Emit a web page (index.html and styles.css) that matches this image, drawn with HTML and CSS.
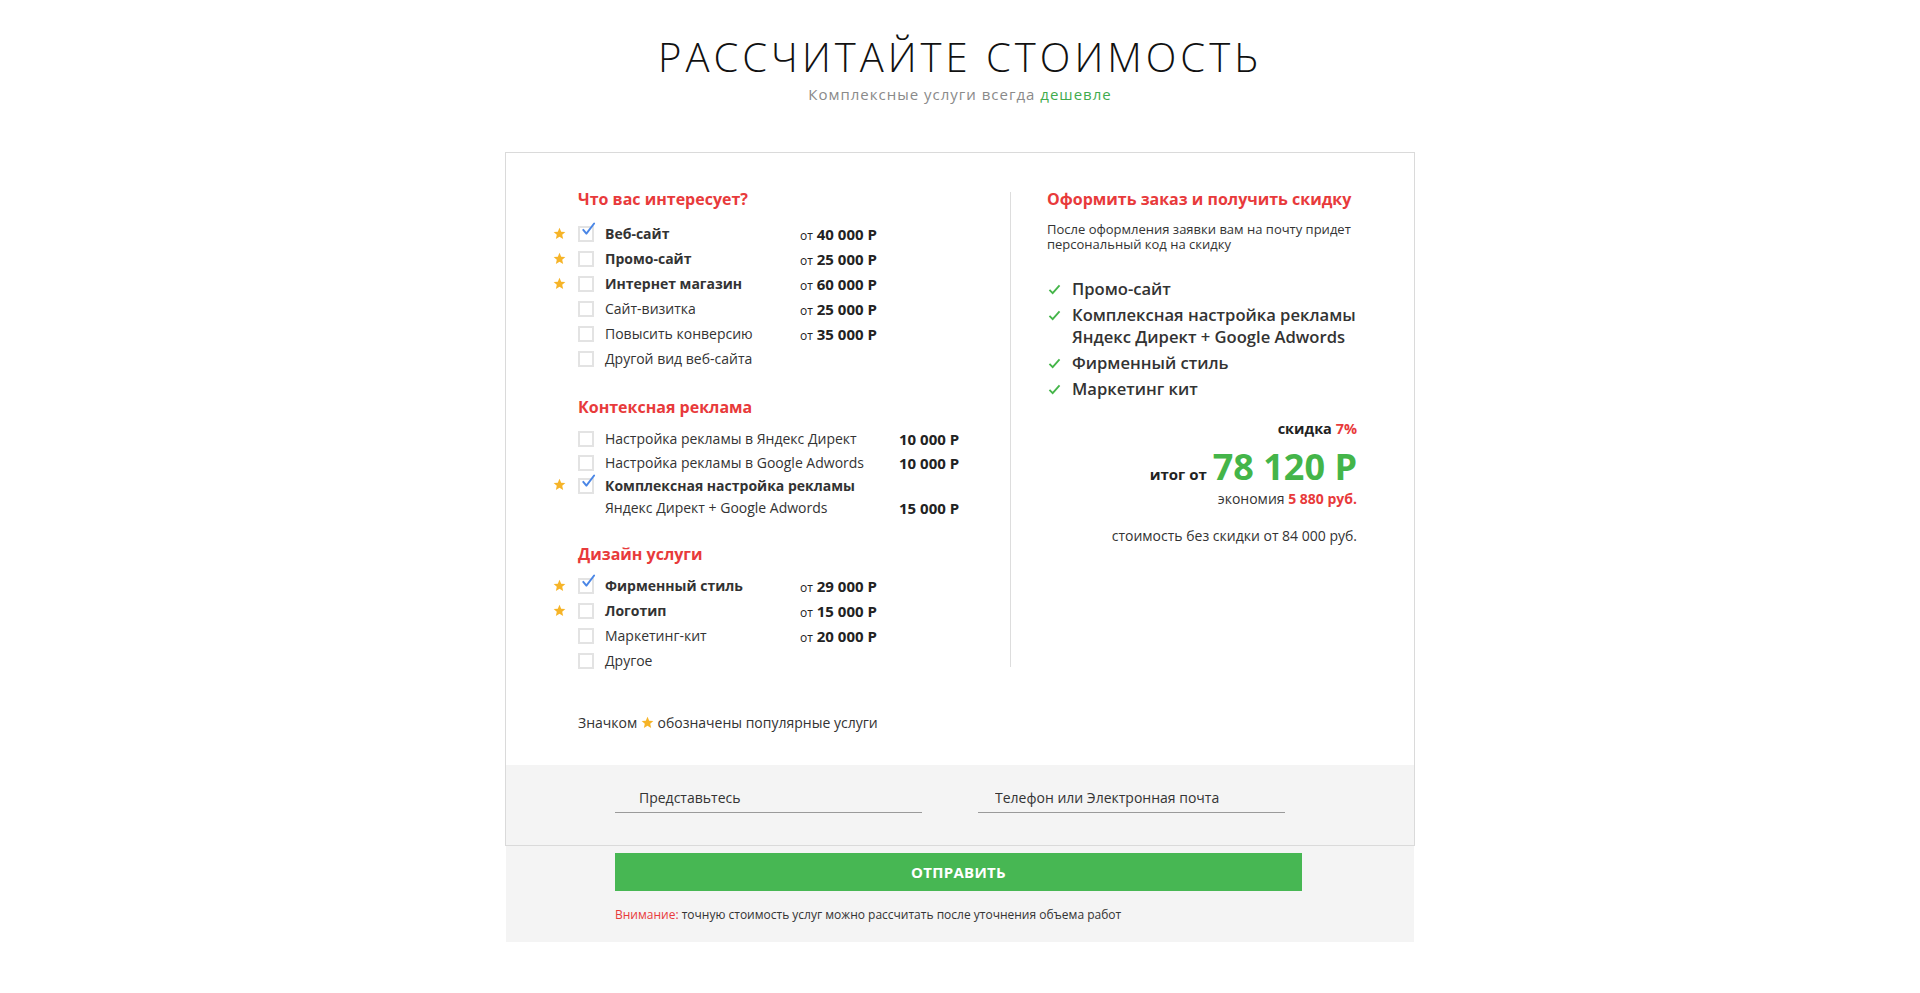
FILE: index.html
```html
<!DOCTYPE html>
<html lang="ru">
<head>
<meta charset="utf-8">
<title>Рассчитайте стоимость</title>
<link rel="stylesheet" href="styles.css">
</head>
<body>
<section class="calc">
  <header class="calc-head">
    <h1 class="calc-title">РАССЧИТАЙТЕ СТОИМОСТЬ</h1>
    <p class="calc-sub">Комплексные услуги всегда <span class="green">дешевле</span></p>
  </header>

  <div class="card">
    <div class="card-body">
      <div class="calc-top">
        <div class="col-left">
          <h3 class="sec-title">Что вас интересует?</h3>
          <ul class="opts opts-1">
            <li class="opt"><span class="star-cell"><svg class="star" viewBox="0 0 24 24"><path d="M12 1.5l3.1 7.1 7.7.7-5.8 5.1 1.7 7.6L12 18l-6.7 4 1.7-7.6-5.8-5.1 7.7-.7z"/></svg></span><span class="cb checked"><svg class="tick" viewBox="0 0 20 20"><path d="M3 10.5l4.2 5L17.5 2"/></svg></span><span class="lbl b">Веб-сайт</span><span class="price"><small>от</small> 40 000 Р</span></li>
            <li class="opt"><span class="star-cell"><svg class="star" viewBox="0 0 24 24"><path d="M12 1.5l3.1 7.1 7.7.7-5.8 5.1 1.7 7.6L12 18l-6.7 4 1.7-7.6-5.8-5.1 7.7-.7z"/></svg></span><span class="cb"></span><span class="lbl b">Промо-сайт</span><span class="price"><small>от</small> 25 000 Р</span></li>
            <li class="opt"><span class="star-cell"><svg class="star" viewBox="0 0 24 24"><path d="M12 1.5l3.1 7.1 7.7.7-5.8 5.1 1.7 7.6L12 18l-6.7 4 1.7-7.6-5.8-5.1 7.7-.7z"/></svg></span><span class="cb"></span><span class="lbl b">Интернет магазин</span><span class="price"><small>от</small> 60 000 Р</span></li>
            <li class="opt"><span class="star-cell"></span><span class="cb"></span><span class="lbl">Сайт-визитка</span><span class="price"><small>от</small> 25 000 Р</span></li>
            <li class="opt"><span class="star-cell"></span><span class="cb"></span><span class="lbl">Повысить конверсию</span><span class="price"><small>от</small> 35 000 Р</span></li>
            <li class="opt"><span class="star-cell"></span><span class="cb"></span><span class="lbl">Другой вид веб-сайта</span><span class="price"></span></li>
          </ul>

          <h3 class="sec-title sec-2">Контексная реклама</h3>
          <ul class="opts opts-2">
            <li class="opt"><span class="star-cell"></span><span class="cb"></span><span class="lbl">Настройка рекламы в Яндекс Директ</span><span class="price">10 000 Р</span></li>
            <li class="opt"><span class="star-cell"></span><span class="cb"></span><span class="lbl">Настройка рекламы в Google Adwords</span><span class="price">10 000 Р</span></li>
            <li class="opt opt-tall"><span class="star-cell"><svg class="star" viewBox="0 0 24 24"><path d="M12 1.5l3.1 7.1 7.7.7-5.8 5.1 1.7 7.6L12 18l-6.7 4 1.7-7.6-5.8-5.1 7.7-.7z"/></svg></span><span class="cb checked"><svg class="tick" viewBox="0 0 20 20"><path d="M3 10.5l4.2 5L17.5 2"/></svg></span><span class="lbl"><b>Комплексная настройка рекламы</b><br>Яндекс Директ + Google Adwords</span><span class="price">15 000 Р</span></li>
          </ul>

          <h3 class="sec-title sec-3">Дизайн услуги</h3>
          <ul class="opts opts-3">
            <li class="opt"><span class="star-cell"><svg class="star" viewBox="0 0 24 24"><path d="M12 1.5l3.1 7.1 7.7.7-5.8 5.1 1.7 7.6L12 18l-6.7 4 1.7-7.6-5.8-5.1 7.7-.7z"/></svg></span><span class="cb checked"><svg class="tick" viewBox="0 0 20 20"><path d="M3 10.5l4.2 5L17.5 2"/></svg></span><span class="lbl b">Фирменный стиль</span><span class="price"><small>от</small> 29 000 Р</span></li>
            <li class="opt"><span class="star-cell"><svg class="star" viewBox="0 0 24 24"><path d="M12 1.5l3.1 7.1 7.7.7-5.8 5.1 1.7 7.6L12 18l-6.7 4 1.7-7.6-5.8-5.1 7.7-.7z"/></svg></span><span class="cb"></span><span class="lbl b">Логотип</span><span class="price"><small>от</small> 15 000 Р</span></li>
            <li class="opt"><span class="star-cell"></span><span class="cb"></span><span class="lbl">Маркетинг-кит</span><span class="price"><small>от</small> 20 000 Р</span></li>
            <li class="opt"><span class="star-cell"></span><span class="cb"></span><span class="lbl">Другое</span><span class="price"></span></li>
          </ul>
        </div>

        <div class="col-right">
          <h3 class="sec-title">Оформить заказ и получить скидку</h3>
          <p class="promo">После оформления заявки вам на почту придет<br>персональный код на скидку</p>
          <ul class="chosen">
            <li><svg class="ok" viewBox="0 0 14 12"><path d="M1.5 6.5l3.5 3.5 7.5-8.5"/></svg><span>Промо-сайт</span></li>
            <li><svg class="ok" viewBox="0 0 14 12"><path d="M1.5 6.5l3.5 3.5 7.5-8.5"/></svg><span>Комплексная настройка рекламы<br>Яндекс Директ + Google Adwords</span></li>
            <li><svg class="ok" viewBox="0 0 14 12"><path d="M1.5 6.5l3.5 3.5 7.5-8.5"/></svg><span>Фирменный стиль</span></li>
            <li><svg class="ok" viewBox="0 0 14 12"><path d="M1.5 6.5l3.5 3.5 7.5-8.5"/></svg><span>Маркетинг кит</span></li>
          </ul>
          <div class="summary">
            <div class="discount">скидка <span class="red">7%</span></div>
            <div class="total"><span class="total-lbl">итог от</span><span class="total-num">78 120 Р</span></div>
            <div class="saving">экономия <b class="red">5 880 руб.</b></div>
            <div class="full-price">стоимость без скидки от 84 000 руб.</div>
          </div>
        </div>
      </div>
      <p class="legend">Значком <svg class="star star-inline" viewBox="0 0 24 24"><path d="M12 1.5l3.1 7.1 7.7.7-5.8 5.1 1.7 7.6L12 18l-6.7 4 1.7-7.6-5.8-5.1 7.7-.7z"/></svg> обозначены популярные услуги</p>
    </div>
    <div class="card-form">
      <input class="field field-name" type="text" placeholder="Представьтесь">
      <input class="field field-contact" type="text" placeholder="Телефон или Электронная почта">
    </div>
  </div>
  <div class="form-bottom">
    <button class="send" type="button">ОТПРАВИТЬ</button>
    <p class="warn"><span class="red">Внимание:</span> точную стоимость услуг можно рассчитать после уточнения объема работ</p>
  </div>
</section>
</body>
</html>
```

FILE: styles.css
```css
* { box-sizing: border-box; }
html, body { margin: 0; padding: 0; background: #fff; }
body {
  font-family: "Open Sans", "Liberation Sans", sans-serif;
  color: #333;
  font-size: 14px;
}
ul { list-style: none; margin: 0; padding: 0; }
p, h1, h3 { margin: 0; }

.calc { padding-top: 33px; padding-bottom: 40px; }

.calc-head { text-align: center; }
.calc-title {
  font-size: 40px;
  line-height: 48px;
  font-weight: 300;
  letter-spacing: 4px;
  color: #111;
}
.calc-sub {
  margin-top: 1px;
  font-size: 15px;
  line-height: 24px;
  letter-spacing: 1px;
  color: #8a8a8a;
}
.green { color: #3fab4d; }
.red { color: #e83a3b; }

.card {
  width: 910px;
  margin: 46px auto 0;
  border: 1px solid #dadada;
  background: #fff;
}
.card-body { padding-bottom: 32px; }
.calc-top { display: flex; align-items: flex-start; padding-top: 39px; }

.col-left { width: 504px; padding-left: 72px; }
.col-right {
  width: 404px;
  height: 475px;
  border-left: 1px solid #ddd;
  padding-left: 36px;
  padding-right: 40px;
}

.sec-title {
  font-size: 16px;
  line-height: 14px;
  font-weight: 700;
  color: #e83a3b;
}
.sec-2 { margin-top: 29px; }
.sec-3 { margin-top: 28px; }

.opts { margin-left: -28px; }
.opts-1 { margin-top: 15px; }
.opts-2 { margin-top: 13px; }
.opts-3 { margin-top: 12px; }

.opt {
  display: flex;
  align-items: center;
  height: 25px;
}
.opts-2 .opt { height: 24px; }
.opt-tall { height: 44px !important; align-items: flex-end; }
.opt-tall .lbl { line-height: 22px; }
.opt-tall .price { line-height: 22px; }
.opt-tall .star-cell, .opt-tall .cb { align-self: flex-start; margin-top: 3px; }

.star-cell { width: 28px; flex: none; display: flex; align-items: center; padding-left: 3px; }
.star { width: 13px; height: 13px; fill: #f6b428; display: block; }

.cb {
  position: relative;
  width: 16px;
  height: 16px;
  flex: none;
  border: 2px solid #e3e3e3;
  background: #fff;
}
.tick {
  position: absolute;
  left: 1px;
  top: -6px;
  width: 15px;
  height: 15px;
  fill: none;
  stroke: #4a86e6;
  stroke-width: 2.6;
  stroke-linecap: round;
  stroke-linejoin: round;
}

.lbl {
  margin-left: 11px;
  width: 195px;
  flex: none;
  color: #333;
  white-space: nowrap;
  font-size: 14px;
  line-height: 20px;
}
.lbl.b, .lbl b { font-weight: 700; }
.opts-2 .lbl { width: 294px; }

.price {
  font-size: 15px;
  font-weight: 700;
  color: #222;
  white-space: nowrap;
}
.price small { font-size: 12px; font-weight: 400; }

/* right column */
.promo {
  margin-top: 16px;
  font-size: 13px;
  line-height: 15px;
  color: #333;
}
.chosen { margin-top: 26px; }
.chosen li {
  display: flex;
  align-items: flex-start;
  font-size: 16.6px;
  line-height: 22px;
  font-weight: 600;
  color: #333;
  white-space: nowrap;
}
.chosen li + li { margin-top: 4px; }
.ok {
  width: 13px;
  height: 11px;
  margin-top: 6px;
  margin-right: 11px;
  margin-left: 1px;
  flex: none;
  fill: none;
  stroke: #44b549;
  stroke-width: 2;
}

.summary { margin-top: 19px; margin-right: 17px; text-align: right; }
.discount { font-size: 14.5px; line-height: 20px; font-weight: 700; color: #222; }
.total {
  margin-top: 8px;
  display: flex;
  justify-content: flex-end;
  align-items: baseline;
  gap: 6px;
}
.total-lbl { font-size: 15px; font-weight: 700; color: #222; }
.total-num { font-size: 36px; line-height: 40px; font-weight: 700; color: #44b549; }
.saving { margin-top: 2px; font-size: 14px; line-height: 20px; color: #333; }
.saving b { font-weight: 700; }
.full-price { margin-top: 17px; font-size: 14px; line-height: 20px; color: #333; }

.legend {
  margin-top: 40px;
  padding-left: 72px;
  font-size: 14px;
  line-height: 20px;
  color: #333;
}
.star-inline { display: inline-block; vertical-align: -1px; width: 13px; height: 13px; }

/* form */
.card-form {
  background: #f4f4f4;
  height: 80px;
  padding: 21px 0 0 109px;
  display: flex;
  align-items: flex-start;
  gap: 56px;
}
.field {
  width: 307px;
  height: 27px;
  border: 0;
  border-bottom: 1px solid #9a9a9a;
  background: transparent;
  font-family: "Open Sans", "Liberation Sans", sans-serif;
  font-size: 14px;
  color: #333;
  outline: none;
  padding: 0 0 4px 24px;
}
.field-contact { padding-left: 17px; }
.field::placeholder { color: #333; opacity: 1; }

.form-bottom {
  width: 908px;
  margin: 0 auto;
  background: #f4f4f4;
  height: 96px;
  padding: 7px 0 0 109px;
}
.send {
  display: block;
  width: 687px;
  height: 38px;
  border: 0;
  background: #47b753;
  color: #fff;
  font-family: "Open Sans", "Liberation Sans", sans-serif;
  font-size: 15px;
  font-weight: 700;
  letter-spacing: 0.3px;
  cursor: pointer;
}
.warn {
  margin-top: 16px;
  font-size: 12px;
  line-height: 16px;
  color: #333;
}
```
